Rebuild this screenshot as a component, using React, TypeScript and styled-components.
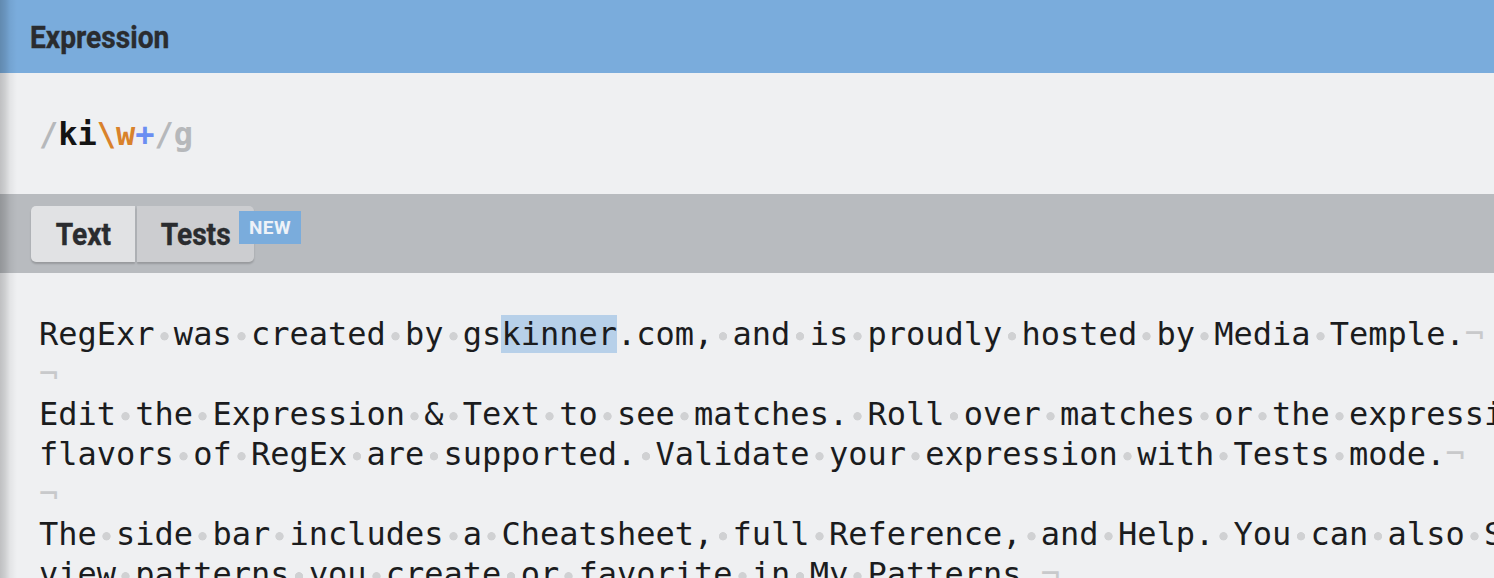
import React from "react";
import styled, { createGlobalStyle } from "styled-components";

const Global = createGlobalStyle`
  html, body { margin: 0; padding: 0; background: #eff0f2; overflow: hidden; }
  #root { width: 1494px; height: 578px; overflow: hidden; }
`;

const Page = styled.div`
  position: relative;
  width: 1494px;
  height: 578px;
  overflow: hidden;
  display: flex;
  flex-direction: column;
  background: #eff0f2;
  &::before {
    content: "";
    position: absolute;
    left: 0;
    top: 0;
    bottom: 0;
    width: 18px;
    pointer-events: none;
    z-index: 5;
    background: linear-gradient(
      to right,
      rgba(0, 0, 0, 0.2) 0px,
      rgba(0, 0, 0, 0.14) 5px,
      rgba(0, 0, 0, 0.05) 10px,
      rgba(0, 0, 0, 0) 17px
    );
  }
`;

const Header = styled.div`
  height: 73px;
  flex: none;
  background: #7aacdc;
  display: flex;
  align-items: center;
  padding-left: 30px;
  box-sizing: border-box;
`;

const Title = styled.span`
  display: inline-block;
  font-family: Roboto, "Liberation Sans", sans-serif;
  font-weight: 700;
  font-size: 32px;
  color: #2a2c2f;
  transform: scaleX(0.88);
  transform-origin: left center;
  -webkit-text-stroke: 0.4px #2a2c2f;
`;

const ExprArea = styled.div`
  flex: none;
  height: 121px;
  box-sizing: border-box;
  padding: 41px 39px 40px;
  font-family: "DejaVu Sans Mono", "Liberation Mono", monospace;
  font-size: 32px;
  line-height: 40px;
  font-weight: 700;
  white-space: pre;
`;

const Tok = styled.span<{ $c: string }>`
  color: ${(p) => p.$c};
`;

const TabBar = styled.div`
  flex: none;
  height: 79px;
  box-sizing: border-box;
  background: #b8bbbf;
  padding: 12px 31px 11px;
  display: flex;
  gap: 2px;
  align-items: stretch;
`;

const TabButton = styled.div<{ $w: number; $active?: boolean; $pos: "left" | "right" }>`
  position: relative;
  width: ${(p) => p.$w}px;
  background: ${(p) => (p.$active ? "#e1e2e4" : "#cccdd0")};
  border-radius: ${(p) => (p.$pos === "left" ? "5px 0 0 5px" : "0 5px 5px 0")};
  box-shadow: 0 2px 2px rgba(0, 0, 0, 0.18);
  display: flex;
  align-items: center;
  justify-content: center;
`;

const TabLabel = styled.span`
  display: inline-block;
  font-family: Roboto, "Liberation Sans", sans-serif;
  font-weight: 700;
  font-size: 32px;
  color: #2a2c2f;
  transform: scaleX(0.88);
  transform-origin: center;
  -webkit-text-stroke: 0.4px #2a2c2f;
`;

const Badge = styled.span`
  position: absolute;
  left: 102px;
  top: 5px;
  width: 62px;
  height: 33px;
  background: #7aacdc;
  color: #eef2f8;
  font-family: Roboto, "Liberation Sans", sans-serif;
  font-weight: 700;
  font-size: 19px;
  letter-spacing: 0.5px;
  display: flex;
  align-items: center;
  justify-content: center;
`;

const TextArea = styled.div`
  flex: 1;
  padding: 41px 0 0 39px;
  font-family: "DejaVu Sans Mono", "Liberation Mono", monospace;
  font-size: 32px;
  color: #1b1c1e;
`;

const Line = styled.div`
  white-space: pre;
  height: 40px;
  line-height: 40px;
`;

const Sp = styled.span`
  background: radial-gradient(circle at 50% 56%, #d0d1d3 3.8px, rgba(208, 209, 211, 0) 4.5px);
`;

const Eol = styled.span`
  color: #c8c9cb;
`;

const Match = styled.span`
  background: #b7d0e9;
`;

function withSpaces(text: string, keyBase: string) {
  return text.split(/( )/).map((part, i) =>
    part === " " ? <Sp key={keyBase + i}> </Sp> : <React.Fragment key={keyBase + i}>{part}</React.Fragment>
  );
}

const lines: { text: string; eol: boolean }[] = [
  { text: "", eol: true },
  {
    text: "Edit the Expression & Text to see matches. Roll over matches or the expression for details. PCRE & JavaScript ",
    eol: false,
  },
  { text: "flavors of RegEx are supported. Validate your expression with Tests mode.", eol: true },
  { text: "", eol: true },
  {
    text: "The side bar includes a Cheatsheet, full Reference, and Help. You can also Save & Share with the Community, and ",
    eol: false,
  },
  { text: "view patterns you create or favorite in My Patterns.", eol: true },
];

export default function App() {
  return (
    <>
      <Global />
      <Page>
        <Header>
          <Title>Expression</Title>
        </Header>
        <ExprArea>
          <Tok $c="#b6b8bb">/</Tok>
          <Tok $c="#141414">ki</Tok>
          <Tok $c="#d9822b">\w</Tok>
          <Tok $c="#6a8ef2">+</Tok>
          <Tok $c="#b6b8bb">/g</Tok>
        </ExprArea>
        <TabBar>
          <TabButton $w={104} $active $pos="left">
            <TabLabel>Text</TabLabel>
          </TabButton>
          <TabButton $w={117} $pos="right">
            <TabLabel>Tests</TabLabel>
            <Badge>NEW</Badge>
          </TabButton>
        </TabBar>
        <TextArea>
          <Line>
            {withSpaces("RegExr was created by gs", "a")}
            <Match>kinner</Match>
            {withSpaces(".com, and is proudly hosted by Media Temple.", "b")}
            <Eol>¬</Eol>
          </Line>
          {lines.map((l, i) => (
            <Line key={i}>
              {withSpaces(l.text, "l" + i + "-")}
              {l.eol && <Eol>¬</Eol>}
            </Line>
          ))}
        </TextArea>
      </Page>
    </>
  );
}
